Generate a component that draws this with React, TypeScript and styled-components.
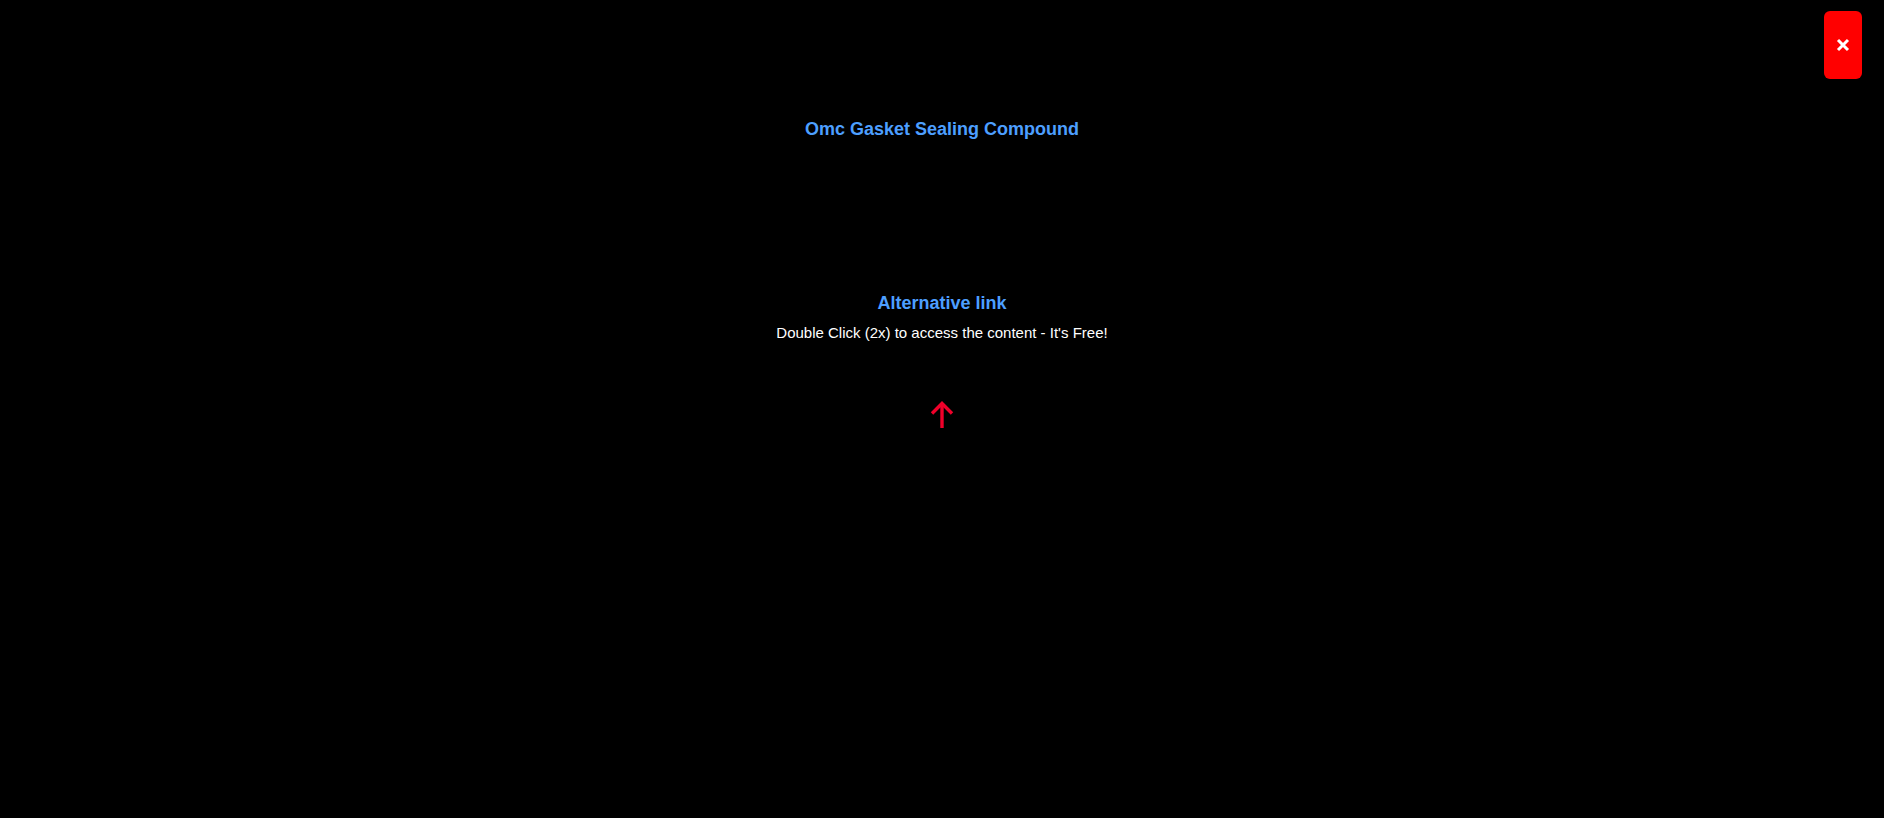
import styled, { createGlobalStyle } from "styled-components";

const GlobalStyle = createGlobalStyle`
	html, body {
		margin: 0;
		padding: 0;
		background: #000;
	}
	body {
		font-family: "Liberation Sans", Arial, sans-serif;
	}
`;

const Page = styled.div`
	width: 100%;
	min-height: 818px;
	background: #000;
	display: flex;
	flex-direction: column;
	align-items: center;
	padding-top: 118px;
	box-sizing: border-box;
`;

const Title = styled.h1`
	margin: 0;
	font-size: 18px;
	font-weight: bold;
	color: #4d9fff;
	line-height: 22px;
`;

const LinkBox = styled.div`
	margin-top: 152px;
	display: flex;
	flex-direction: column;
	align-items: center;
	gap: 10px;
`;

const LinkTitle = styled.h2`
	margin: 0;
	font-size: 18px;
	font-weight: bold;
	color: #4d9fff;
	line-height: 22px;
`;

const Hint = styled.p`
	margin: 0;
	font-size: 15px;
	color: #fff;
	line-height: 18px;
`;

const Arrow = styled.div`
	margin-top: 59px;
	width: 24px;
	height: 28px;
	color: #f0002a;
`;

const CloseButton = styled.button`
	position: fixed;
	top: 11px;
	right: 22px;
	width: 38px;
	height: 68px;
	border: none;
	border-radius: 6px;
	background: #ff0000;
	color: #fff;
	display: flex;
	align-items: center;
	justify-content: center;
	padding: 0;
	cursor: pointer;
`;

export default function App() {
	return (
		<>
			<GlobalStyle />
			<Page>
				<Title>Omc Gasket Sealing Compound</Title>
				<LinkBox>
					<LinkTitle>Alternative link</LinkTitle>
					<Hint>Double Click (2x) to access the content - It's Free!</Hint>
				</LinkBox>
				<Arrow>
					<svg width="24" height="28" viewBox="0 0 24 28" fill="none" stroke="currentColor" strokeWidth="3.4">
						<path d="M12 27V3" />
						<path d="M2 12.5L12 2.5L22 12.5" />
					</svg>
				</Arrow>
			</Page>
			<CloseButton aria-label="close">
				<svg width="14" height="14" viewBox="0 0 14 14" stroke="#fff" strokeWidth="3">
					<path d="M2 2L12 12M12 2L2 12" />
				</svg>
			</CloseButton>
		</>
	);
}
